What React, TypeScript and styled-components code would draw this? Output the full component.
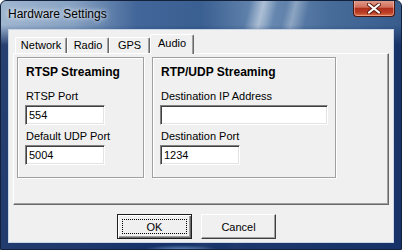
import React from 'react';
import styled, { createGlobalStyle } from 'styled-components';

const GlobalStyle = createGlobalStyle`
    html, body {
        margin: 0;
        padding: 0;
        background: #ffffff;
    }
    body {
        font-family: "Liberation Sans", Arial, sans-serif;
        font-size: 11px;
        color: #000;
    }
`;

const Window = styled.div`
    width: 402px;
    height: 250px;
    box-sizing: border-box;
    display: flex;
    flex-direction: column;
    border: 1px solid #14213a;
    border-radius: 6px 6px 0 0;
    overflow: hidden;
    background:
        radial-gradient(ellipse 40px 6px at 180px 250px, rgba(160, 210, 255, 0.7), rgba(160, 210, 255, 0)),
        linear-gradient(180deg, rgba(0, 0, 0, 0) 0px, rgba(0, 0, 0, 0) 24px, rgba(18, 44, 98, 0.85) 44px, rgba(20, 46, 100, 0.9) 100%),
        linear-gradient(104deg, rgba(255,255,255,0) 54%, rgba(255,255,255,0.45) 57%, rgba(255,255,255,0) 60%, rgba(255,255,255,0) 62%, rgba(255,255,255,0.3) 64%, rgba(255,255,255,0) 67%),
        linear-gradient(90deg, #9fb6d0 0%, #86a1c2 18%, #426699 34%, #3a5f91 50%, #6b8cb3 66%, #486c9a 82%, #385c8c 100%);
`;

const TitleBar = styled.div`
    height: 28px;
    display: flex;
    justify-content: space-between;
    align-items: flex-start;
    flex-shrink: 0;
`;

const Title = styled.span`
    font-family: "Liberation Sans", Arial, sans-serif;
    font-size: 12px;
    line-height: 26px;
    padding-left: 7px;
    color: #000;
    text-shadow: 0 0 4px rgba(255, 255, 255, 0.9), 0 0 8px rgba(255, 255, 255, 0.7);
`;

const CloseButton = styled.div`
    width: 42px;
    height: 17px;
    margin-top: -1px;
    margin-right: 6px;
    box-sizing: border-box;
    border: 1px solid #4a1610;
    border-top: none;
    border-radius: 0 0 4px 4px;
    background: linear-gradient(180deg, #e4a090 0%, #d0705c 45%, #b02f1c 52%, #bc3f27 80%, #dc7448 100%);
    box-shadow: inset 0 0 0 1px rgba(255, 200, 190, 0.5);
    display: flex;
    align-items: center;
    justify-content: center;
`;

const Client = styled.div`
    flex: 1;
    margin: 0 7px 6px 7px;
    background: #f0f0f0;
    border: 1px solid #c9d6e6;
    display: flex;
    flex-direction: column;
`;

const TabRow = styled.div`
    display: flex;
    align-items: flex-end;
    height: 19px;
    margin-top: 4px;
    padding-left: 6px;
`;

const Tab = styled.div<{ $active?: boolean; $w: number }>`
    position: relative;
    width: ${p => p.$w}px;
    height: ${p => (p.$active ? 20 : 16)}px;
    margin-bottom: ${p => (p.$active ? -1 : 0)}px;
    box-sizing: border-box;
    background: #f0f0f0;
    border-top: 1px solid #fff;
    border-left: 1px solid #fff;
    border-right: 1px solid #696969;
    box-shadow: inset -1px 0 0 #a0a0a0;
    border-radius: 2px 2px 0 0;
    z-index: ${p => (p.$active ? 2 : 1)};
    text-align: center;
    line-height: ${p => (p.$active ? 17 : 15)}px;
    font-size: 11px;
`;

const Panel = styled.div`
    position: relative;
    z-index: 1;
    margin-left: 4px;
    width: 376px;
    height: 152px;
    box-sizing: border-box;
    border-top: 1px solid #fff;
    border-left: 1px solid #fff;
    border-right: 1px solid #696969;
    border-bottom: 1px solid #696969;
    box-shadow: inset -1px -1px 0 #a0a0a0;
    padding: 3px 0 0 3px;
    display: flex;
    gap: 8px;
    align-items: flex-start;
`;

const Group = styled.div<{ $w: number }>`
    width: ${p => p.$w}px;
    height: 121px;
    box-sizing: border-box;
    border: 1px solid #a0a0a0;
    box-shadow: inset 1px 1px 0 #fff, 1px 1px 0 #fff;
    padding: 6px 0 0 7px;
    display: flex;
    flex-direction: column;
    align-items: flex-start;
`;

const GroupTitle = styled.div`
    font-weight: bold;
    font-size: 12px;
    line-height: 16px;
    padding-left: 1px;
`;

const Label = styled.div<{ $first?: boolean }>`
    font-size: 11px;
    line-height: 14px;
    margin-top: ${p => (p.$first ? 9 : 4)}px;
    padding-left: 1px;
`;

const Field = styled.div<{ $w: number }>`
    width: ${p => p.$w}px;
    height: 20px;
    margin-top: 2px;
    box-sizing: border-box;
    background: #fff;
    border-top: 1px solid #808080;
    border-left: 1px solid #808080;
    border-right: 1px solid #fff;
    border-bottom: 1px solid #fff;
    box-shadow: inset 1px 1px 0 #404040, inset -1px -1px 0 #e3e3e3;
    padding-left: 3px;
    font-size: 11px;
    line-height: 18px;
`;

const ButtonRow = styled.div`
    display: flex;
    gap: 9px;
    margin-top: 9px;
    padding-left: 108px;
`;

const Button = styled.div<{ $default?: boolean }>`
    position: relative;
    width: 75px;
    height: 25px;
    box-sizing: border-box;
    background: #f0f0f0;
    font-size: 11px;
    display: flex;
    align-items: center;
    justify-content: center;
    border: 1px solid ${p => (p.$default ? '#1e1e1e' : '#fff')};
    ${p => (p.$default
        ? 'box-shadow: inset 1px 1px 0 #fff, inset -1px -1px 0 #696969, inset -2px -2px 0 #a0a0a0;'
        : 'border-right-color: #404040; border-bottom-color: #404040; box-shadow: inset -1px -1px 0 #a0a0a0;')}
`;

const FocusRing = styled.div`
    position: absolute;
    inset: 4px;
    border: 1px dotted #000;
`;

const CloseIcon = () => (
    <svg width="14" height="11" viewBox="0 0 14 11">
        <path d="M2 1.5 L12 9.5 M12 1.5 L2 9.5" stroke="#5b1a10" strokeWidth="4" strokeLinecap="round" />
        <path d="M2 1.5 L12 9.5 M12 1.5 L2 9.5" stroke="#ffffff" strokeWidth="2.2" strokeLinecap="round" />
    </svg>
);

const App: React.FC = () => {
    return (
        <>
            <GlobalStyle />
            <Window>
                <TitleBar>
                    <Title>Hardware Settings</Title>
                    <CloseButton>
                        <CloseIcon />
                    </CloseButton>
                </TitleBar>
                <Client>
                    <TabRow>
                        <Tab $w={52}>Network</Tab>
                        <Tab $w={42}>Radio</Tab>
                        <Tab $w={41}>GPS</Tab>
                        <Tab $w={44} $active>Audio</Tab>
                    </TabRow>
                    <Panel>
                        <Group $w={127}>
                            <GroupTitle>RTSP Streaming</GroupTitle>
                            <Label $first>RTSP Port</Label>
                            <Field $w={80}>554</Field>
                            <Label>Default UDP Port</Label>
                            <Field $w={80}>5004</Field>
                        </Group>
                        <Group $w={184}>
                            <GroupTitle>RTP/UDP Streaming</GroupTitle>
                            <Label $first>Destination IP Address</Label>
                            <Field $w={168}></Field>
                            <Label>Destination Port</Label>
                            <Field $w={80}>1234</Field>
                        </Group>
                    </Panel>
                    <ButtonRow>
                        <Button $default>
                            <FocusRing />
                            OK
                        </Button>
                        <Button>Cancel</Button>
                    </ButtonRow>
                </Client>
            </Window>
        </>
    );
};

export default App;
